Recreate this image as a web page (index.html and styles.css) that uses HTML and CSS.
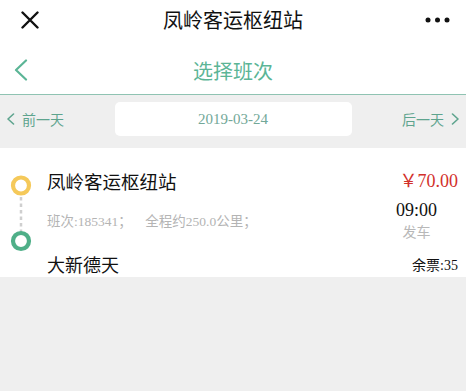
FILE: index.html
```html
<!DOCTYPE html>
<html lang="zh">
<head>
<meta charset="utf-8">
<title>选择班次</title>
<link rel="stylesheet" href="styles.css">
</head>
<body>
<div class="topbar">
  <svg class="close" width="18" height="18" viewBox="0 0 18 18"><path d="M1.5 1.5 L16.5 16.5 M16.5 1.5 L1.5 16.5" stroke="#111" stroke-width="2.4" stroke-linecap="round"/></svg>
  <div class="top-title">凤岭客运枢纽站</div>
  <svg class="more" width="26" height="6" viewBox="0 0 26 6"><circle cx="3" cy="3" r="2.5" fill="#111"/><circle cx="12.5" cy="3" r="2.5" fill="#111"/><circle cx="22" cy="3" r="2.5" fill="#111"/></svg>
</div>
<div class="navbar">
  <svg class="back" width="14" height="22" viewBox="0 0 14 22"><path d="M12 1.5 L2 11 L12 20.5" fill="none" stroke="#5bb596" stroke-width="2.2" stroke-linecap="round" stroke-linejoin="round"/></svg>
  <div class="nav-title">选择班次</div>
</div>
<div class="datebar">
  <div class="day prev">
    <svg width="9" height="12" viewBox="0 0 9 12"><path d="M7.5 1 L2 6 L7.5 11" fill="none" stroke="#5ea48e" stroke-width="1.6" stroke-linecap="round" stroke-linejoin="round"/></svg>
    <span>前一天</span>
  </div>
  <div class="datebox">2019-03-24</div>
  <div class="day next">
    <span>后一天</span>
    <svg width="9" height="12" viewBox="0 0 9 12"><path d="M1.5 1 L7 6 L1.5 11" fill="none" stroke="#5ea48e" stroke-width="1.6" stroke-linecap="round" stroke-linejoin="round"/></svg>
  </div>
</div>
<div class="card">
  <svg class="timeline" width="42" height="129" viewBox="0 0 42 129">
    <line x1="21" y1="49" x2="21" y2="84" stroke="#cfcfcf" stroke-width="2.5" stroke-dasharray="3.5 3"/>
    <circle cx="21" cy="37.5" r="8" fill="#fff" stroke="#f5c95a" stroke-width="4.2"/>
    <circle cx="21" cy="93" r="8" fill="#fff" stroke="#4faf88" stroke-width="4.2"/>
  </svg>
  <div class="content">
    <div class="row row-top">
      <div class="station">凤岭客运枢纽站</div>
      <div class="price">￥70.00</div>
    </div>
    <div class="row row-mid">
      <div class="info">班次:185341；&nbsp;&nbsp;&nbsp;&nbsp;全程约250.0公里；</div>
      <div class="depart">
        <div class="time">09:00</div>
        <div class="depart-label">发车</div>
      </div>
    </div>
    <div class="row row-bottom">
      <div class="station">大新德天</div>
      <div class="tickets">余票:35</div>
    </div>
  </div>
</div>
</body>
</html>
```
FILE: styles.css
```css
* { box-sizing: border-box; }
html, body { margin: 0; padding: 0; }
body {
  width: 466px;
  height: 391px;
  background: #efefef;
  font-family: "Liberation Serif", "Noto Sans CJK SC", serif;
  overflow: hidden;
}
.topbar {
  height: 40px;
  background: #fff;
  display: flex;
  align-items: center;
  justify-content: space-between;
  padding: 0 15px 0 21px;
  position: relative;
}
.top-title {
  position: absolute;
  left: 0;
  right: 0;
  text-align: center;
  font-family: "Noto Sans CJK SC", sans-serif;
  font-size: 20px;
  line-height: 40px;
  color: #111;
  pointer-events: none;
}
.navbar {
  height: 55px;
  background: #fff;
  border-bottom: 1px solid #8fc3b2;
  display: flex;
  align-items: center;
  padding: 6px 0 0 14px;
  position: relative;
}
.nav-title {
  position: absolute;
  left: 0;
  right: 0;
  top: 6px;
  bottom: 0;
  display: flex;
  align-items: center;
  justify-content: center;
  font-family: "Noto Sans CJK SC", sans-serif;
  font-size: 20px;
  color: #5bb596;
}
.datebar {
  display: grid;
  grid-template-columns: 1fr 237px 1fr;
  align-items: center;
  padding: 7px 6px 12px 6px;
}
.day {
  display: flex;
  align-items: center;
  gap: 7px;
  font-family: "Noto Sans CJK SC", sans-serif;
  font-size: 14px;
  color: #5ea48e;
}
.prev { justify-self: start; }
.next { justify-self: end; }
.datebox {
  height: 34px;
  background: #fff;
  border-radius: 5px;
  display: flex;
  align-items: center;
  justify-content: center;
  font-size: 15px;
  color: #72a898;
}
.card {
  background: #fff;
  height: 129px;
  display: flex;
}
.timeline { flex: none; }
.content {
  flex: 1;
  padding: 21px 8px 0 5px;
}
.row {
  display: flex;
  justify-content: space-between;
}
.station {
  font-family: "Noto Sans CJK SC", sans-serif;
  font-size: 18.5px;
  line-height: 24px;
  color: #111;
}
.row-top { align-items: center; }
.price {
  font-size: 18px;
  line-height: 24px;
  color: #d2302b;
}
.row-mid {
  margin-top: 6px;
  align-items: center;
}
.info {
  font-size: 13.5px;
  color: #b4b4b4;
}
.depart {
  margin-right: 21px;
  text-align: center;
}
.time {
  font-size: 18px;
  line-height: 22px;
  color: #111;
}
.depart-label {
  font-family: "Noto Sans CJK SC", sans-serif;
  font-size: 14px;
  line-height: 20px;
  color: #b8b8b8;
}
.row-bottom {
  margin-top: 11px;
  align-items: center;
}
.row-bottom .station { font-size: 18px; }
.tickets {
  font-size: 14px;
  color: #111;
}
```
